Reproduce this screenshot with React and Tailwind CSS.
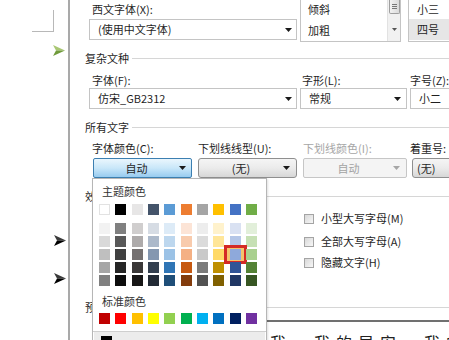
import React from "react";

const theme = ["#FFFFFF","#000000","#E7E6E6","#44546A","#5B9BD5","#ED7D31","#A5A5A5","#FFC000","#4472C4","#70AD47"];
const shades = [
  ["#F2F2F2","#808080","#D0CECE","#D6DCE4","#DDEBF7","#FCE4D6","#EDEDED","#FFF2CC","#D9E1F2","#E2EFDA"],
  ["#D9D9D9","#595959","#AEABAB","#ACB9CA","#BDD7EE","#F8CBAD","#DBDBDB","#FFE699","#B4C6E7","#C6E0B4"],
  ["#BFBFBF","#404040","#757171","#8497B0","#9BC2E6","#F4B084","#C9C9C9","#FFD966","#8EA9DB","#A9D08E"],
  ["#A6A6A6","#262626","#3A3838","#333F4F","#2F75B5","#C65911","#7B7B7B","#BF8F00","#305496","#548235"],
  ["#808080","#0D0D0D","#171616","#222A35","#1F4E78","#833C0C","#525252","#806000","#203764","#375623"],
];
const standard = ["#C00000","#FF0000","#FFC000","#FFFF00","#92D050","#00B050","#00B0F0","#0070C0","#002060","#7030A0"];

function Tri({ color = "#1a1a1a" }) {
  return (
    <svg width="7" height="4" viewBox="0 0 7 4" className="shrink-0">
      <polygon points="0,0 7,0 3.5,4" fill={color} />
    </svg>
  );
}

function Arrow({ light, dark, className }) {
  return (
    <svg width="12" height="11" viewBox="0 0 12 11" className={className}>
      <polygon points="0,0 12,5.5 3,5.5" fill={light} />
      <polygon points="3,5.5 12,5.5 0,11" fill={dark} />
    </svg>
  );
}

function Group({ label, className = "" }) {
  return (
    <div className={`flex items-center h-[16px] ${className}`}>
      <span>{label}</span>
      <div className="flex-1 ml-[3px] border-t border-[#d6d6d6]" />
    </div>
  );
}

function Select({ text, className = "" }) {
  return (
    <div className={`h-[21px] border border-[#c4c4c4] bg-white flex items-center pl-[8px] pr-[4px] ${className}`}>
      <span className="flex-1 whitespace-nowrap">{text}</span>
      <Tri />
    </div>
  );
}

function Check({ label, className = "" }) {
  return (
    <div className={`flex items-center h-[21px] ${className}`}>
      <div className="w-[10px] h-[10px] border border-[#a4a4a4] bg-linear-to-br from-[#d8d8d8] to-[#f7f7f7]" />
      <span className="ml-[7px] whitespace-nowrap">{label}</span>
    </div>
  );
}

function Swatch({ c, selected }) {
  return (
    <div className="relative w-[11px] h-[11px]">
      {selected && (
        <div className="absolute -left-[6px] -top-[4px] w-[23px] h-[19px] border-[3px] border-[#d42a25] bg-[#f4c46c]" />
      )}
      <div
        className={`relative w-[11px] h-[11px] ${c === "#FFFFFF" ? "border border-[#e2e2e2]" : ""}`}
        style={{ backgroundColor: c }}
      />
    </div>
  );
}

function Palette() {
  return (
    <div className="absolute -left-[1px] top-full w-[175px] h-[170px] z-20 bg-white border border-[#b6b6b6] shadow-[1px_1px_2px_rgba(0,0,0,0.12)] flex flex-col text-[#333]">
      <div className="mt-[4px] h-[16px] pl-[9px] flex items-center">主题颜色</div>
      <div className="mt-[5px] ml-[6px] w-[158px] flex justify-between">
        {theme.map((c, i) => (
          <Swatch key={i} c={c} />
        ))}
      </div>
      <div className="mt-[8px] ml-[6px] w-[158px] flex flex-col gap-[2px]">
        {shades.map((row, r) => (
          <div key={r} className="flex justify-between">
            {row.map((c, i) => (
              <Swatch key={i} c={c} selected={r === 2 && i === 8} />
            ))}
          </div>
        ))}
      </div>
      <div className="mt-[7px] h-[16px] pl-[9px] flex items-center">标准颜色</div>
      <div className="mt-[4px] ml-[6px] w-[158px] flex justify-between">
        {standard.map((c, i) => (
          <Swatch key={i} c={c} />
        ))}
      </div>
      <div className="mt-[7px] border-t border-[#cfcfcf]" />
      <div className="flex-1 mx-[1px] bg-[#ececec] pl-[7px] pt-[4px]">
        <div className="w-[11px] h-[11px] bg-black" />
      </div>
    </div>
  );
}

export default function App() {
  return (
    <div className="w-[449px] h-[340px] overflow-hidden bg-white flex text-[11px] text-[#1f1f1f] leading-none font-['Noto_Sans_CJK_SC','Noto_Sans',sans-serif]">
      {/* document margin */}
      <div className="w-[68px] shrink-0 flex flex-col">
        <div className="ml-[32px] mt-[10px] w-[22px] h-[22px] border-r border-b border-[#b8b8b8]" />
        <Arrow light="#a9c773" dark="#6f9a3a" className="ml-[53px] mt-[13px]" />
        <Arrow light="#3a3a3a" dark="#000000" className="ml-[54px] mt-[179px]" />
        <Arrow light="#3a3a3a" dark="#000000" className="ml-[54px] mt-[27px]" />
      </div>

      {/* dialog */}
      <div className="flex-1 min-w-0 border-l-2 border-[#a9a9a9] pl-[15px] flex flex-col">
        {/* top row */}
        <div className="flex h-[42px] shrink-0">
          <div className="ml-[4px] w-[208px] shrink-0 flex flex-col">
            <div className="h-[19px] pl-[3px] flex items-center">西文字体(X):</div>
            <Select text="(使用中文字体)" className="w-[208px] h-[20px]" />
          </div>
          <div className="ml-[3px] w-[101px] h-[42px] shrink-0 border-x border-b border-[#c4c4c4] flex">
            <div className="flex-1 flex flex-col pl-[7px]">
              <div className="h-[19px] flex items-center">倾斜</div>
              <div className="h-[22px] flex items-center">加粗</div>
            </div>
            <div className="w-[13px] bg-[#f1f1f1] border-l border-[#e2e2e2] flex flex-col items-center">
              <div className="w-[11px] h-[14px] border border-t-0 border-[#9f9f9f] rounded-b-[2px] bg-linear-to-r from-[#f3f3f3] to-[#dadada] flex flex-col items-center justify-center gap-[1px]">
                <div className="w-[5px] border-t border-[#777]" />
                <div className="w-[5px] border-t border-[#777]" />
                <div className="w-[5px] border-t border-[#777]" />
              </div>
              <div className="flex-1 flex items-center justify-center pt-[4px]">
                <svg width="5" height="3" viewBox="0 0 5 3"><polygon points="0,0 5,0 2.5,3" fill="#555" /></svg>
              </div>
            </div>
          </div>
          <div className="ml-[7px] w-[80px] h-[42px] shrink-0 border-l border-b border-[#c4c4c4] flex flex-col">
            <div className="h-[19px] pl-[8px] flex items-center">小三</div>
            <div className="h-[21px] pl-[8px] flex items-center bg-[#e6e6e6]">四号</div>
          </div>
        </div>

        {/* 复杂文种 */}
        <Group label="复杂文种" className="mt-[8px] shrink-0" />
        <div className="flex mt-[6px] h-[16px] items-center shrink-0">
          <div className="ml-[7px] w-[208px] shrink-0">字体(F):</div>
          <div className="ml-[2px] w-[108px] shrink-0">字形(L):</div>
          <div className="shrink-0 whitespace-nowrap">字号(Z):</div>
        </div>
        <div className="flex h-[21px] shrink-0">
          <Select text="仿宋_GB2312" className="ml-[4px] w-[208px] shrink-0" />
          <Select text="常规" className="ml-[3px] w-[107px] shrink-0 pl-[7px] pr-[5px]" />
          <Select text="小二" className="ml-[3px] w-[80px] shrink-0" />
        </div>

        {/* 所有文字 */}
        <Group label="所有文字" className="mt-[10px] shrink-0" />
        <div className="flex mt-[5px] h-[16px] items-center shrink-0 whitespace-nowrap">
          <div className="ml-[7px] w-[106px] shrink-0">字体颜色(C):</div>
          <div className="w-[105px] shrink-0">下划线线型(U):</div>
          <div className="w-[107px] shrink-0 text-[#a6a6a6]">下划线颜色(I):</div>
          <div className="shrink-0">着重号:</div>
        </div>
        <div className="flex mt-[2px] h-[20px] shrink-0 whitespace-nowrap">
          <div className="relative ml-[8px] w-[99px] shrink-0">
            <div className="h-[20px] border border-[#3c7fb1] rounded-[2px] bg-linear-to-b from-[#eaf6fd] via-[#c9e7f9] to-[#97cbef] flex items-center pr-[5px]">
              <span className="flex-1 text-center">自动</span>
              <Tri />
            </div>
            <Palette />
          </div>
          <div className="ml-[6px] w-[99px] shrink-0 h-[20px] border border-[#8f8f8f] rounded-[3px] bg-linear-to-b from-[#f5f5f5] via-[#ebebeb] to-[#d7d7d7] flex items-center pr-[6px]">
            <span className="flex-1 text-center">(无)</span>
            <Tri />
          </div>
          <div className="ml-[6px] w-[104px] shrink-0 h-[20px] border border-[#c6c6c6] rounded-[2px] bg-[#f4f4f4] flex items-center pr-[6px] text-[#a3a3a3]">
            <span className="flex-1 text-center">自动</span>
            <Tri color="#a6a6a6" />
          </div>
          <div className="ml-[5px] w-[80px] shrink-0 h-[20px] border border-[#8f8f8f] rounded-[3px] bg-linear-to-b from-[#f5f5f5] via-[#ebebeb] to-[#d7d7d7] flex items-center pl-[4px]">
            <span>(无)</span>
          </div>
        </div>

        {/* 效果 */}
        <Group label="效果" className="mt-[10px] shrink-0" />
        <div className="flex shrink-0 mt-[4px]">
          <div className="ml-[11px] w-[208px] shrink-0 flex flex-col gap-[2px]">
            <Check label="删除线(K)" />
            <Check label="双删除线(L)" />
            <Check label="上标(P)" />
          </div>
          <div className="shrink-0 flex flex-col">
            <Check label="小型大写字母(M)" />
            <Check label="全部大写字母(A)" className="mt-[2px]" />
            <Check label="隐藏文字(H)" />
          </div>
        </div>

        {/* 预览 */}
        <Group label="预览" className="mt-[24px] shrink-0" />
        <div className="ml-[7px] mt-[5px] border-t-2 border-[#707070] shrink-0 pt-[12px] pl-[178px] text-[16px] tracking-[6px] whitespace-nowrap text-[#222]">
          我，我的早安，我的春天
        </div>
      </div>
    </div>
  );
}
